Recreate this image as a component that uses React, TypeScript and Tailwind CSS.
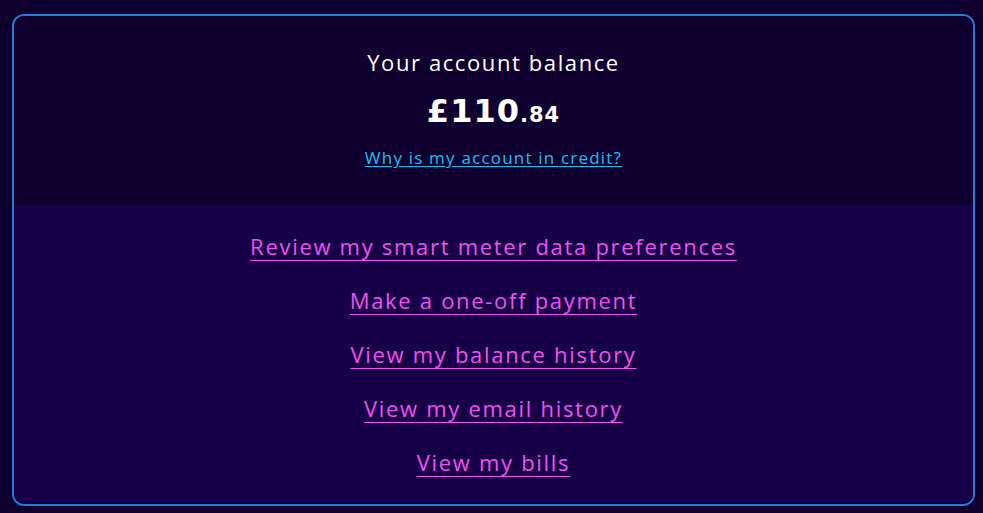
export default function App() {
  const links = [
    'Review my smart meter data preferences',
    'Make a one-off payment',
    'View my balance history',
    'View my email history',
    'View my bills',
  ];

  return (
    <div className="min-h-screen bg-[#100030] pt-[14px] pb-2 pl-3" style={{ fontFamily: '"Open Sans", "Noto Sans", sans-serif' }}>
      <div className="w-[963px] overflow-hidden rounded-xl border-2 border-[#1f7fd9]">
        <div className="flex flex-col items-center bg-[#100030] pt-[31px] pb-[35px]">
          <p className="text-[22px] leading-[30px] tracking-[1.6px] text-white">Your account balance</p>
          <p className="mt-[16px] text-[32px] font-bold leading-[36px] tracking-[1px] text-white" style={{ fontFamily: '"DejaVu Sans", sans-serif' }}>
            £110<span className="text-[21px]">.84</span>
          </p>
          <a href="#" className="mt-[13px] text-[17px] font-medium leading-[24px] tracking-[1.2px] text-[#12c3f0] underline underline-offset-2">
            Why is my account in credit?
          </a>
        </div>
        <div className="flex flex-col items-center gap-[24px] bg-[#180048] pt-[26px] pb-[27px]">
          {links.map((l) => (
            <a key={l} href="#" className="text-[22px] font-medium leading-[30px] tracking-[1.7px] text-[#ee52f0] underline decoration-1 underline-offset-[5px]">
              {l}
            </a>
          ))}
        </div>
      </div>
    </div>
  );
}
